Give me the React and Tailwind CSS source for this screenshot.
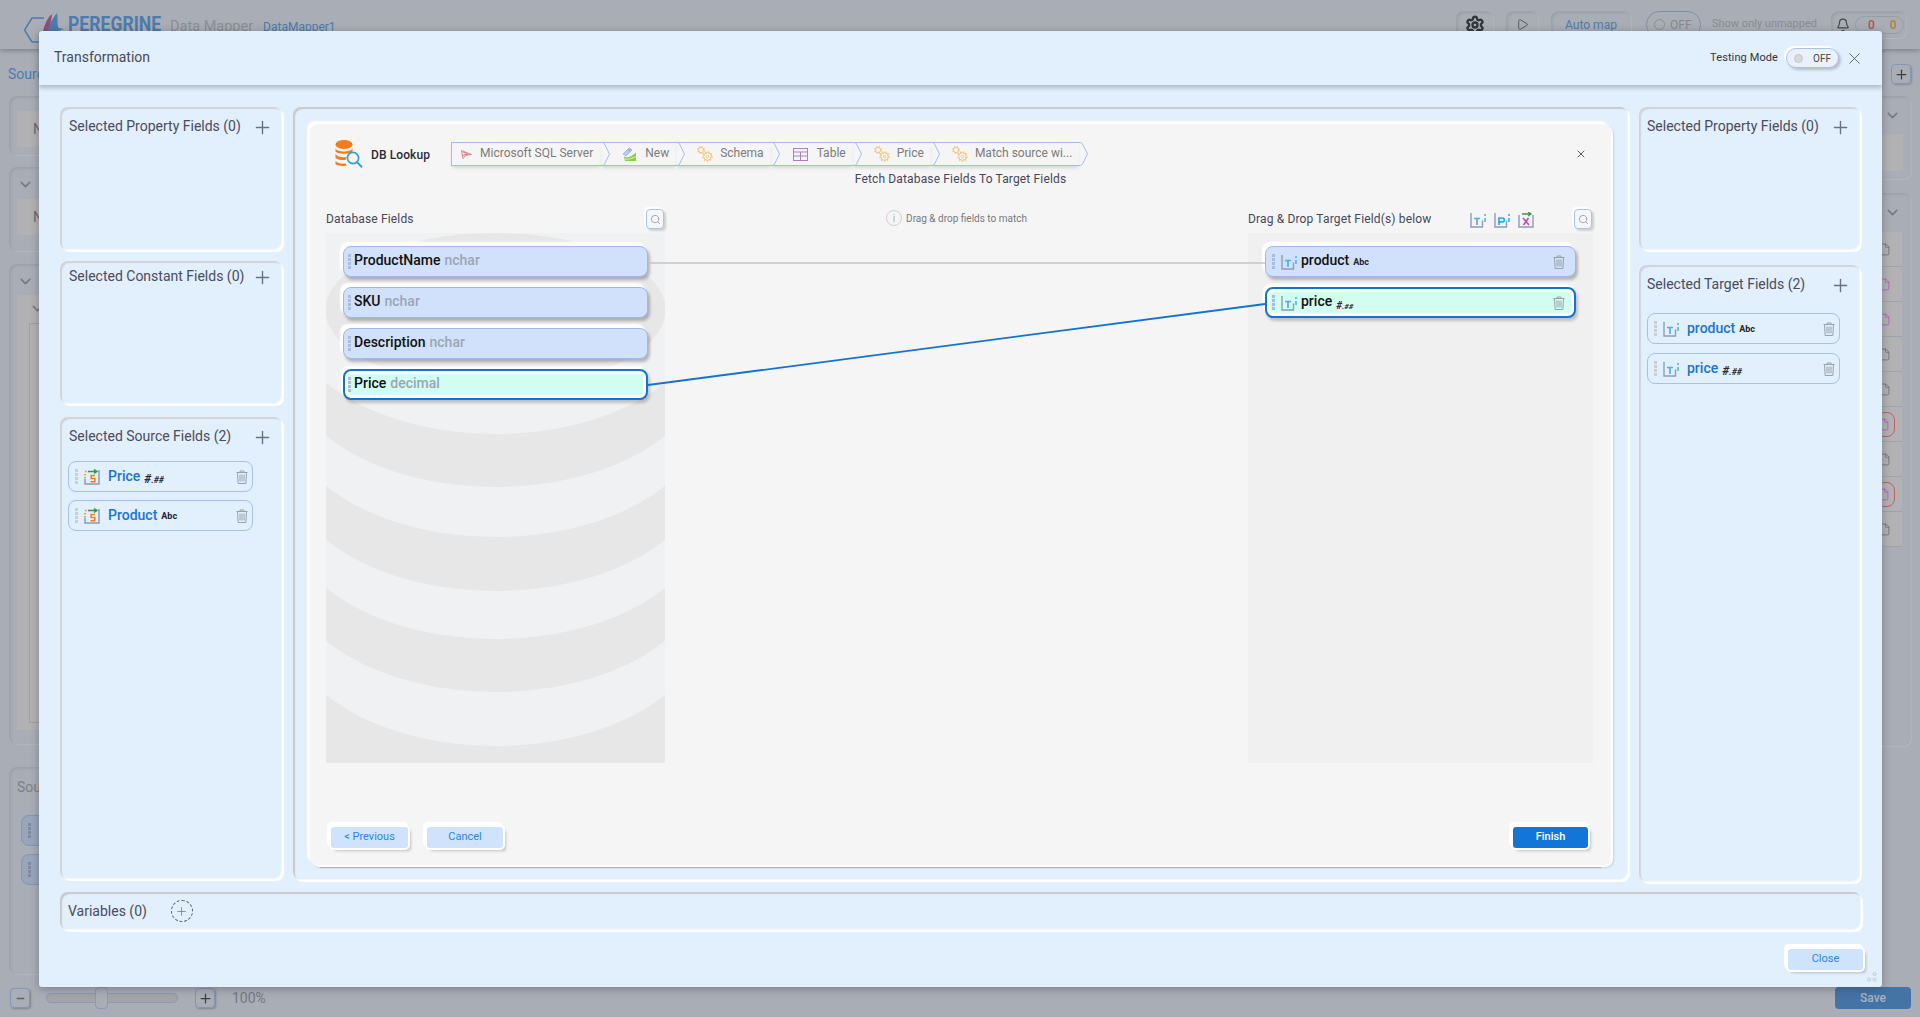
import React from "react";
import { Settings, Play, Bell, ChevronDown, Plus, X, Minus, Search, File } from "lucide-react";

const FONT = { fontFamily: "Roboto, 'Liberation Sans', sans-serif" };

function Trash({ c = "#98a2ad" }) {
  return (
    <svg width="12" height="14" viewBox="0 0 12 14" fill="none" stroke={c} strokeWidth="1">
      <path d="M0.5 2.5h11M4 2.5V1h4v1.5M1.5 2.5l.6 11h7.8l.6-11M4 4.5v7M6 4.5v7M8 4.5v7" />
    </svg>
  );
}

function Handle({ c = "#c9ced6", h = 4 }) {
  return (
    <div className="flex flex-col gap-[1.5px] w-[3px] shrink-0">
      {Array.from({ length: h }).map((_, i) => (
        <div key={i} className="w-[3px] h-[2.5px]" style={{ background: c }} />
      ))}
    </div>
  );
}

function TIcon({ c = "#46b1ea" }) {
  return (
    <svg width="16" height="16" viewBox="0 0 16 16" fill="none" className="shrink-0">
      <path d="M1 1v14h11.5V8.5" stroke="#8d9cb8" strokeWidth="1.4" />
      <path d="M4 6.5h6M7 6.5V13" stroke={c} strokeWidth="1.7" />
      <path d="M15 2v2M15 6v4" stroke={c} strokeWidth="1.5" />
    </svg>
  );
}

function PIcon() {
  return (
    <svg width="16" height="16" viewBox="0 0 16 16" fill="none" className="shrink-0">
      <path d="M1 1v14h11.5V8.5" stroke="#8d9cb8" strokeWidth="1.4" />
      <path d="M5 13V6h3.4a1.9 1.9 0 010 3.8H5" stroke="#18aef0" strokeWidth="1.7" />
      <path d="M15 2v2M15 6v4" stroke="#18aef0" strokeWidth="1.5" />
    </svg>
  );
}

function XIcon() {
  return (
    <svg width="16" height="16" viewBox="0 0 16 16" fill="none" className="shrink-0">
      <path d="M1 3v12h14V3" stroke="#8d9cb8" strokeWidth="1.4" />
      <path d="M5 6l6 7M10.5 6l-5 7" stroke="#c84fa8" strokeWidth="1.7" />
      <path d="M4 2h8M10 0l3 2-3 2" stroke="#3a9a4a" strokeWidth="1.4" />
    </svg>
  );
}

function SIcon() {
  return (
    <svg width="16" height="16" viewBox="0 0 16 16" fill="none" className="shrink-0">
      <path d="M1 10v5h14V1" stroke="#8d9cb8" strokeWidth="1.5" />
      <path d="M1 2.5h1.6" stroke="#f08a2c" strokeWidth="1.6" />
      <path d="M4 2.5h8M10 0.5l3 2-3 2" stroke="#2e9a44" strokeWidth="1.4" />
      <path d="M11 6.5H7.2v3h3.6v3.2H6.5" stroke="#f07f1f" strokeWidth="1.6" />
      <path d="M1 5v1.5M1 8v1.5" stroke="#f08a2c" strokeWidth="1.6" />
    </svg>
  );
}

function Gears() {
  return (
    <svg width="16" height="16" viewBox="0 0 16 16" fill="none" stroke="#ebc77f" className="shrink-0 mr-[7px]">
      <circle cx="4" cy="4" r="2.6" strokeWidth="1" />
      <circle cx="4" cy="4" r="3.4" strokeWidth="1.2" strokeDasharray="1.3 1.4" />
      <circle cx="10.5" cy="10.5" r="3.8" strokeWidth="1" />
      <circle cx="10.5" cy="10.5" r="4.6" strokeWidth="1.3" strokeDasharray="1.5 1.6" />
      <circle cx="10.5" cy="10.5" r="1.3" strokeWidth="0.9" />
    </svg>
  );
}

function NewIcon() {
  return (
    <svg width="15" height="15" viewBox="0 0 15 15" className="shrink-0 mr-[8px]" fill="none">
      <path d="M1 7l6-6 3 2-6 6z" fill="#b8cdf0" stroke="#8aa9df" strokeWidth="0.7" />
      <path d="M6 4l3-2" stroke="#7d9fdc" strokeWidth="1" />
      <path d="M2 9.5c3 2 8 0 12-4V14H3z" fill="#8ccb4a" />
      <path d="M3 12c3 .6 7-.4 11-2.5" stroke="#f1f7e6" strokeWidth="0.8" />
    </svg>
  );
}

function SqlIcon() {
  return (
    <svg width="11" height="9" viewBox="0 0 11 9" className="shrink-0 mr-[8px]" fill="none" stroke="#d9626f" strokeWidth="0.8">
      <path d="M0.5 0.5l10 4-5.5.6-3 3.4z" />
      <path d="M2 2l5 2.4-3.8.5" />
      <path d="M1 5.5l3-.6" />
    </svg>
  );
}

function TableIcon() {
  return (
    <svg width="15" height="13" viewBox="0 0 15 13" className="shrink-0 ml-[1px] mr-[9px]" fill="none" stroke="#ab7fc4" strokeWidth="1">
      <rect x="0.5" y="0.5" width="14" height="12" />
      <path d="M0.5 4h14M0.5 8h14M7.5 4v8.5" />
    </svg>
  );
}

function DbIcon() {
  return (
    <svg width="28" height="28" viewBox="0 0 28 28" fill="none" className="shrink-0">
      <ellipse cx="9" cy="4.5" rx="8.5" ry="4.5" fill="#f47b20" />
      <path d="M0.5 8.5c2 4 15 4 17 0v3c-2 3-15 3-17 0z" fill="#f47b20" />
      <path d="M0.5 14c2 3.5 10 3.5 11 3l-1 3c-4 .4-8-.4-10-2z" fill="#f47b20" />
      <path d="M0.5 21c2 2.5 6 3 10 2.6l1.5 2c-3 .6-9 .4-11.5-1.4z" fill="#f47b20" />
      <circle cx="18" cy="18" r="5.6" stroke="#2fa3dc" strokeWidth="1.7" fill="#f5f5f5" />
      <path d="M22 22l5 5.2" stroke="#2fa3dc" strokeWidth="2" />
    </svg>
  );
}

function Crumb({ first, icon, label }) {
  return (
    <div className={`flex h-[24px] items-stretch ${first ? "" : "-ml-[9px]"}`}>
      <div
        className={`flex items-center border-y border-[#a2bde9] text-[12px] text-[#7b7b7b] shadow-[0_3px_3px_-1px_rgba(0,0,0,0.12)] ${
          first ? "border-l pl-[9px] pr-[8px]" : "pl-[21px] pr-[7px]"
        }`}
      >
        {icon}
        <span className="relative -top-[1px]">{label}</span>
      </div>
      <svg width="9" height="24" viewBox="0 0 9 24" fill="none" className="shrink-0 relative z-10">
        <path d="M0 0.5 C3 0.5 3 1 4 3 L8.5 12 L4 21 C3 23 3 23.5 0 23.5" stroke="#a2bde9" fill="none" />
      </svg>
    </div>
  );
}

function Panel({ title, className = "", compact = false, left = false, children }) {
  return (
    <div
      className={`rounded-lg bg-[#e2effc] shadow-[inset_2px_2px_1px_#d2d3d8,inset_-1px_-1px_0_#f3f8fe,1px_1px_0_#fff,2px_2px_1px_#fff] ${className}`}
    >
      <div
        className={`flex items-center justify-between pr-[9px] text-[14px] text-[#4b4b5c] ${left ? "pl-[9px]" : "pl-[8px]"} ${
          compact ? "pt-[6px] h-[27px]" : "pt-[10px] h-[31px]"
        }`}
      >
        <span className="relative -top-[1px]">{title}</span>
        <Plus size={21} strokeWidth={1.6} color="#6b7280" className="shrink-0" />
      </div>
      {children}
    </div>
  );
}

function Hash({ size = "12px", small = "9px" }) {
  return (
    <span className="text-[#2a2a2a] font-bold italic ml-[4px] relative top-[1px]">
      <span style={{ fontSize: size }}>#</span>
      <span style={{ fontSize: small }}>.##</span>
    </span>
  );
}

function Abc() {
  return <span className="text-[9px] font-bold text-[#23232b] ml-[4px] relative top-[1px]">Abc</span>;
}

function Card({ icon, name, meta }) {
  return (
    <div className="flex items-center h-[31px] rounded-lg border border-[#a7c1ea] pl-[6px] pr-[3px]">
      <Handle />
      <span className="w-[6px] shrink-0" />
      {icon}
      <span className="ml-[8px] text-[14px] font-medium text-[#1876d4]">{name}</span>
      {meta}
      <span className="ml-auto mr-[1px] flex">
        <Trash />
      </span>
    </div>
  );
}

function FieldRow({ selected, children, className = "" }) {
  return (
    <div
      className={`flex items-center h-[31px] rounded-lg ${
        selected
          ? "border-2 border-[#1273d1] bg-[#d2fdf1] shadow-[inset_0_0_0_3px_#fff,2px_3px_3px_rgba(0,0,0,0.2),-2px_-3px_2px_#fff]"
          : "border border-[#9cb9ea] bg-[#d1e1fc] shadow-[2px_3px_3px_rgba(0,0,0,0.25),-3px_-4px_2px_#fff]"
      } ${className}`}
    >
      {children}
    </div>
  );
}

function SrcField({ name, type, selected }) {
  return (
    <FieldRow selected={selected} className={selected ? "pl-[3px]" : "pl-[4px]"}>
      <Handle c="#a7bde0" h={4} />
      <span className="ml-[3px] text-[14px] font-medium text-[#111] relative -top-[1px]">{name}</span>
      <span className="ml-[4px] text-[14px] font-medium text-[#9aa6b4] relative -top-[1px]">{type}</span>
    </FieldRow>
  );
}

function TgtField({ name, meta, selected }) {
  return (
    <FieldRow selected={selected} className={`${selected ? "pl-[5px] pr-[9px]" : "pl-[6px] pr-[10px]"}`}>
      <Handle c="#a7bde0" h={4} />
      <span className="w-[6px] shrink-0" />
      <TIcon />
      <span className="ml-[4px] text-[14px] font-medium text-[#111] relative -top-[1px]">{name}</span>
      {meta}
      <span className="ml-auto flex">
        <Trash />
      </span>
    </FieldRow>
  );
}

function SoftBtn({ children, className = "" }) {
  return (
    <button
      className={`h-[21px] rounded-[3px] bg-[#cfe3fc] text-[11px] text-[#2a86e0] shadow-[0_0_0_2px_#fff,3px_3px_3px_rgba(0,0,0,0.2),-2px_-3px_0_2px_#fff] ${className}`}
    >
      {children}
    </button>
  );
}

function DbBackdrop() {
  const bands = [
    [746, "#f0f1f2"],
    [692, "#e7e7e7"],
    [639, "#f0f1f2"],
    [591, "#e7e7e7"],
    [537, "#f0f1f2"],
    [487, "#e7e7e7"],
  ];
  const y0 = 233;
  return (
    <svg width="339" height="530" viewBox="0 0 339 530" className="absolute inset-0">
      <rect width="339" height="530" fill="#e7e7e7" />
      {bands.map(([b, c]) => (
        <ellipse key={b} cx="169.5" cy={b - y0 - 125} rx="210" ry="125" fill={c} />
      ))}
      <rect width="339" height="90" fill="#f0f1f2" />
      <ellipse cx="169.5" cy={434 - y0 - 125} rx="210" ry="125" fill="#f0f1f2" />
      <ellipse cx="169.5" cy="77" rx="170" ry="77" fill="#e7e7e7" />
    </svg>
  );
}

function SearchBtn() {
  return (
    <button className="w-[18px] h-[20px] flex items-center justify-center rounded-[4px] bg-[#f5f6f8] border border-[#a9c3ec] shadow-[2px_2px_2px_rgba(0,0,0,0.15),-2px_-2px_1px_#fff]">
      <Search size={11} strokeWidth={1.6} color="#8b8f96" />
    </button>
  );
}

function BackBox({ children, className = "" }) {
  return <div className={`rounded-lg shadow-[inset_2px_2px_2px_#9ea2aa,1px_1px_1px_#b3b6bc] ${className}`}>{children}</div>;
}

function Background() {
  const fileColors = ["#6b6b70", "#c04fc0", "#c04fc0", "#6b6b70", "#6b6b70", "#c04fc0", "#6b6b70", "#c04fc0", "#6b6b70"];
  return (
    <div className="flex flex-col h-[1017px] bg-[#a9adb6]">
      <header className="flex items-center justify-between h-[49px] shrink-0 pl-[24px] pr-[14px] bg-[#a9adb5] shadow-[0_2px_4px_rgba(60,60,70,0.35)]">
        <div className="flex items-center">
          <svg width="42" height="40" viewBox="0 0 42 40" fill="none" className="shrink-0">
            <path d="M0.5 25L8 13h12M8 37L0.5 25M8 37h10" stroke="#4c7bad" strokeWidth="1.5" />
            <path d="M18 32c1-8 4-18 10-23-1 8-2 15-6 21z" fill="#8c4f78" />
            <path d="M22 32c2-10 6-18 11-24 1 6 0 14 2 15l5 1-10 4-8 8z" fill="#4c7bad" />
          </svg>
          <span className="ml-[2px] text-[20px] font-bold text-[#4c7bad] relative -top-[1px] w-[102px] inline-block scale-x-[0.88] origin-left">PEREGRINE</span>
          <span className="text-[14.5px] text-[#8b8e95] relative top-[2px]">Data Mapper</span>
          <span className="ml-[10px] text-[12px] text-[#4c7bad] relative top-[2px]">DataMapper1</span>
        </div>
        <div className="flex items-center text-[12px]">
          <BackBox className="w-[37px] h-[27px] flex items-center justify-center">
            <Settings size={20} strokeWidth={2.8} color="#33353a" />
          </BackBox>
          <BackBox className="ml-[13px] w-[32px] h-[27px] flex items-center justify-center">
            <Play size={13} strokeWidth={1.5} color="#44464c" />
          </BackBox>
          <BackBox className="ml-[13px] w-[80px] h-[27px] flex items-center justify-center text-[#4c7bad]">Auto map</BackBox>
          <div className="ml-[15px] w-[55px] h-[27px] flex items-center rounded-full border border-[#7f8ea8] pl-[7px] text-[#85888f]">
            <span className="w-[11px] h-[11px] rounded-full border border-[#8a8d93] mr-[5px]" />
            OFF
          </div>
          <span className="ml-[11px] text-[11px] text-[#888b92] w-[104px] whitespace-nowrap">Show only unmapped</span>
          <BackBox className="ml-[15px] w-[75px] h-[27px] flex items-center pl-[5px]">
            <Bell size={14} color="#44464c" />
            <span className="ml-[5px] flex gap-[15px] pl-[12px] pr-[6px] h-[18px] items-center rounded-full border border-[#9a9da3] font-medium">
              <span className="text-[#b3534f]">0</span>
              <span className="text-[#b57d3a]">0</span>
            </span>
          </BackBox>
        </div>
      </header>

      <div className="flex items-center justify-between h-[47px] shrink-0 pl-[8px] pr-[9px] pt-[3px]">
        <span className="text-[14px] text-[#4c7bad]">Source</span>
        <span className="w-[20px] h-[20px] rounded-[4px] border border-[#8496b5] flex items-center justify-center shadow-[1px_1px_2px_rgba(0,0,0,0.2)]">
          <Plus size={15} color="#3d4048" />
        </span>
      </div>

      <div className="flex-1 flex justify-between pl-[9px] pr-[9px] min-h-0">
        <div className="w-[200px] flex flex-col gap-[13px]">
          <BackBox className="h-[59px] -mb-px pl-[8px] pt-[15px]">
            <div className="h-[36px] bg-[#b2b2b4] pl-[16px] text-[#66686e] text-[14px] flex items-center">N</div>
          </BackBox>
          <BackBox className="h-[84px] px-[8px]">
            <ChevronDown size={17} color="#74787f" className="mt-[9px]" />
            <div className="h-[36px] mt-[6px] bg-[#b2b2b4] pl-[16px] text-[#66686e] text-[14px] flex items-center">N</div>
          </BackBox>
          <BackBox className="h-[480px] px-[8px]">
            <ChevronDown size={17} color="#74787f" className="mt-[9px]" />
            <div className="h-[435px] mt-[5px] bg-[#b2b2b4] pl-[12px] pt-[5px]">
              <ChevronDown size={17} color="#74787f" />
              <div className="h-[400px] mt-[6px] border border-[#9da0a6]" />
            </div>
          </BackBox>
          <BackBox className="h-[207px] mt-[10px] pl-[8px] pt-[10px] text-[14px] text-[#7d8087]">
            Source
            <div className="mt-[17px] ml-[4px] w-[60px] h-[31px] rounded-lg bg-[#98a5bd] border border-[#8496b5] flex items-center pl-[6px]">
              <Handle c="#7f8a9e" />
            </div>
            <div className="mt-[8px] ml-[4px] w-[60px] h-[31px] rounded-lg bg-[#98a5bd] border border-[#8496b5] flex items-center pl-[6px]">
              <Handle c="#7f8a9e" />
            </div>
          </BackBox>
        </div>
        <div className="w-[220px] flex flex-col gap-[14px]">
          <BackBox className="h-[83px] shrink-0 pr-[8px] flex flex-col items-end">
            <ChevronDown size={17} color="#74787f" className="mt-[11px] mr-[2px]" />
            <div className="w-full h-[37px] mt-[10px] bg-[#b2b2b4]" />
          </BackBox>
          <BackBox className="h-[553px] shrink-0 pr-[9px] flex flex-col items-end">
            <ChevronDown size={17} color="#74787f" className="mt-[11px] mr-[1px]" />
            <div className="w-full mt-[11px] bg-[#b2b2b4]">
              {fileColors.map((c, i) => (
                <div key={i} className="h-[35px] flex items-center justify-end pr-[11px] border-b border-[#9da3ae]">
                  <span className={`${i === 5 || i === 7 ? "rounded-lg border border-[#c0605f] -mr-[4px] pr-[4px] py-[5px]" : ""} flex`}>
                    <File size={13} color={c} strokeWidth={1.4} />
                  </span>
                </div>
              ))}
            </div>
            <div className="w-full mt-[26px] pl-[180px]">
              <div className="w-[6px] h-[30px] rounded-r-lg bg-[#8397ba]" />
              <div className="w-[6px] h-[31px] mt-[8px] rounded-r-lg bg-[#8397ba]" />
            </div>
          </BackBox>
          <div className="h-[100px]" />
        </div>
      </div>

      <div className="h-[31px] shrink-0 flex items-center pb-[7px] pl-[10px] pr-[9px] text-[14px] relative">
        <span className="w-[20px] h-[20px] rounded-[4px] border border-[#8496b5] flex items-center justify-center shadow-[1px_1px_2px_rgba(0,0,0,0.25)]">
          <Minus size={11} strokeWidth={3} color="#5e6168" />
        </span>
        <div className="ml-[16px] w-[132px] h-[10px] rounded-full border border-[#8b99b2] bg-[#a3a4a7] flex items-center pl-[48px]">
          <span className="w-[13px] h-[22px] rounded-[4px] border border-[#8b99b2] bg-[#a9adb6] shrink-0" />
        </div>
        <span className="ml-[17px] w-[20px] h-[20px] rounded-[4px] border border-[#8496b5] flex items-center justify-center shadow-[1px_1px_2px_rgba(0,0,0,0.25)]">
          <Plus size={15} color="#3d4048" />
        </span>
        <span className="ml-[17px] text-[#75787f]">100%</span>
        <button className="ml-auto w-[76px] h-[22px] rounded-[4px] bg-[#4473a6] text-[12px] font-medium text-[#a9b2be]">Save</button>
      </div>
    </div>
  );
}

export default function App() {
  return (
    <div className="relative w-full h-[1017px] overflow-hidden" style={FONT}>
      <Background />

      {/* Modal */}
      <div className="absolute left-[39px] top-[31px] w-[1843px] h-[956px] rounded-[3px] bg-[#e2effc] shadow-[0_2px_8px_rgba(40,40,50,0.35)] flex flex-col">
        <div className="h-[54px] shrink-0 flex items-center justify-between pl-[15px] pr-[18px] shadow-[0_3px_4px_rgba(100,110,130,0.4)] rounded-t-[3px]">
          <span className="text-[14px] text-[#494a58] relative -top-[1px]">Transformation</span>
          <div className="flex items-center">
            <span className="text-[11px] text-[#333542] tracking-[0.1px]">Testing Mode</span>
            <div className="ml-[8px] w-[53px] h-[20px] flex items-center rounded-full bg-[#eaf1fb] border border-[#a9c3ec] pl-[7px] shadow-[2px_2px_3px_rgba(0,0,0,0.2),-2px_-2px_1px_#fff] text-[10px] text-[#444]">
              <span className="w-[9px] h-[9px] rounded-full bg-[#d5d8dd] border border-[#c3c7cd] mr-[10px]" />
              OFF
            </div>
            <X size={19} strokeWidth={1.1} color="#50535c" className="ml-[6px]" />
          </div>
        </div>

        <div className="flex gap-[11px] px-[21px] pt-[22px] shrink-0">
          {/* Left column */}
          <div className="w-[222px] shrink-0 flex flex-col">
            <Panel left title="Selected Property Fields (0)" className="h-[143px]" />
            <Panel left compact title="Selected Constant Fields (0)" className="h-[143px] mt-[11px]" />
            <Panel left title="Selected Source Fields (2)" className="h-[462px] mt-[13px]">
              <div className="flex flex-col gap-[8px] w-[185px] ml-[8px] mt-[13px]">
                <Card icon={<SIcon />} name="Price" meta={<Hash />} />
                <Card icon={<SIcon />} name="Product" meta={<Abc />} />
              </div>
            </Panel>
          </div>

          {/* Center */}
          <div className="w-[1335px] h-[773px] shrink-0 rounded-lg pl-[17px] pt-[17px] shadow-[inset_2px_2px_1px_#c9cad0,inset_-1px_-1px_0_#f3f8fe,1px_1px_0_#fff,2px_2px_1px_#fff]">
            <div className="relative w-[1301px] h-[741px] rounded-lg bg-[#f5f5f5] shadow-[-3px_-3px_2px_#fff,2px_2px_0_#fff,3px_3px_2px_rgba(0,0,0,0.12),0_13px_1px_-10px_#c4c4c4] flex flex-col">
              <div className="flex items-start pl-[25px] pr-[24px] pt-[16px] h-[43px] shrink-0">
                <DbIcon />
                <span className="ml-[8px] mt-[6px] text-[12px] font-medium text-[#2b2b36] tracking-[0.1px] w-[80px]">DB Lookup</span>
                <div className="flex mt-[2px]">
                  <Crumb first icon={<SqlIcon />} label="Microsoft SQL Server" />
                  <Crumb icon={<NewIcon />} label="New" />
                  <Crumb icon={<Gears />} label="Schema" />
                  <Crumb icon={<TableIcon />} label="Table" />
                  <Crumb icon={<Gears />} label="Price" />
                  <Crumb icon={<Gears />} label="Match source wi..." />
                </div>
                <X size={12} strokeWidth={2} color="#55585f" className="ml-auto mt-[8px]" />
              </div>
              <div className="text-center text-[12px] text-[#464757] tracking-[0.15px] h-[20px] leading-[24px] shrink-0">
                Fetch Database Fields To Target Fields
              </div>

              <div className="flex px-[16px] pt-[22px] shrink-0 pr-[18px]">
                {/* Left col */}
                <div className="w-[339px] shrink-0">
                  <div className="h-[24px] flex items-start justify-between pr-[1px]">
                    <span className="text-[12px] text-[#464757] mt-[1px] tracking-[0.15px]">Database Fields</span>
                    <SearchBtn />
                  </div>
                  <div className="relative h-[530px] overflow-hidden">
                    <DbBackdrop />
                    <div className="relative flex flex-col gap-[10px] pl-[17px] w-[322px] pt-[13px]">
                      <SrcField name="ProductName" type="nchar" />
                      <SrcField name="SKU" type="nchar" />
                      <SrcField name="Description" type="nchar" />
                      <SrcField name="Price" type="decimal" selected />
                    </div>
                  </div>
                </div>
                {/* Middle */}
                <div className="flex-1 flex justify-center">
                  <div className="flex items-center h-[16px] text-[10px] text-[#767982] mt-[1px]">
                    <span className="w-[16px] h-[16px] rounded-full border border-[#cfd1d4] flex items-center justify-center text-[10px] text-[#aeb0b4] mr-[4px]">i</span>
                    Drag &amp; drop fields to match
                  </div>
                </div>
                {/* Right col */}
                <div className="w-[345px] shrink-0">
                  <div className="h-[24px] flex items-start">
                    <span className="text-[12px] text-[#464757] mt-[1px] tracking-[0.15px]">Drag &amp; Drop Target Field(s) below</span>
                    <span className="ml-[39px] mt-[3px] flex gap-[8px]">
                      <TIcon />
                      <PIcon />
                      <XIcon />
                    </span>
                    <span className="ml-auto mr-[1px]"><SearchBtn /></span>
                  </div>
                  <div className="h-[530px] bg-[#f0f0f0] flex flex-col gap-[10px] pl-[17px] pr-[17px] pt-[13px]">
                    <TgtField name="product" meta={<Abc />} />
                    <TgtField name="price" meta={<Hash size="10px" small="8px" />} selected />
                  </div>
                </div>
              </div>

              <div className="flex items-center pl-[21px] pr-[23px] mt-[64px] shrink-0">
                <SoftBtn className="w-[77px]">&lt; Previous</SoftBtn>
                <SoftBtn className="w-[76px] ml-[19px]">Cancel</SoftBtn>
                <button className="ml-auto w-[75px] h-[21px] rounded-[3px] bg-[#1276d8] text-[11px] font-medium text-white shadow-[0_0_0_2px_#fff,3px_3px_3px_rgba(0,0,0,0.2),-2px_-3px_0_2px_#fff]">
                  Finish
                </button>
              </div>

              <svg width="1301" height="741" className="absolute inset-0 pointer-events-none" fill="none">
                <path d="M338 139H955" stroke="#c4c4c4" strokeWidth="1.5" />
                <path d="M338 261L955 180" stroke="#1273d1" strokeWidth="1.8" />
              </svg>
            </div>
          </div>

          {/* Right column */}
          <div className="w-[221px] shrink-0 flex flex-col">
            <Panel title="Selected Property Fields (0)" className="h-[143px]" />
            <Panel title="Selected Target Fields (2)" className="h-[617px] mt-[15px]">
              <div className="flex flex-col gap-[9px] w-[193px] ml-[8px] mt-[17px]">
                <Card icon={<TIcon />} name="product" meta={<Abc />} />
                <Card icon={<TIcon />} name="price" meta={<Hash />} />
              </div>
            </Panel>
          </div>
        </div>

        <div className="mx-[21px] mt-[10px] h-[38px] flex items-center pl-[8px] rounded-lg text-[14px] text-[#4b4b5c] shadow-[inset_2px_2px_1px_#c9cad0,inset_-1px_-1px_0_#f3f8fe,1px_1px_0_#fff,2px_2px_1px_#fff] shrink-0">
          Variables (0)
          <span className="ml-[24px] w-[22px] h-[22px] rounded-full border border-dashed border-[#5f636b] flex items-center justify-center">
            <Plus size={13} strokeWidth={1.2} color="#5f636b" />
          </span>
        </div>

        <div className="flex justify-end pr-[19px] mt-[19px] shrink-0">
          <SoftBtn className="w-[75px]">Close</SoftBtn>
        </div>

        <svg width="10" height="10" viewBox="0 0 10 10" className="absolute right-[5px] bottom-[5px]" fill="none" stroke="#c3c7cc">
          <circle cx="7.5" cy="2" r="1.5" />
          <circle cx="7.5" cy="7.5" r="1.5" />
          <circle cx="2" cy="7.5" r="1.5" />
        </svg>
      </div>
    </div>
  );
}
